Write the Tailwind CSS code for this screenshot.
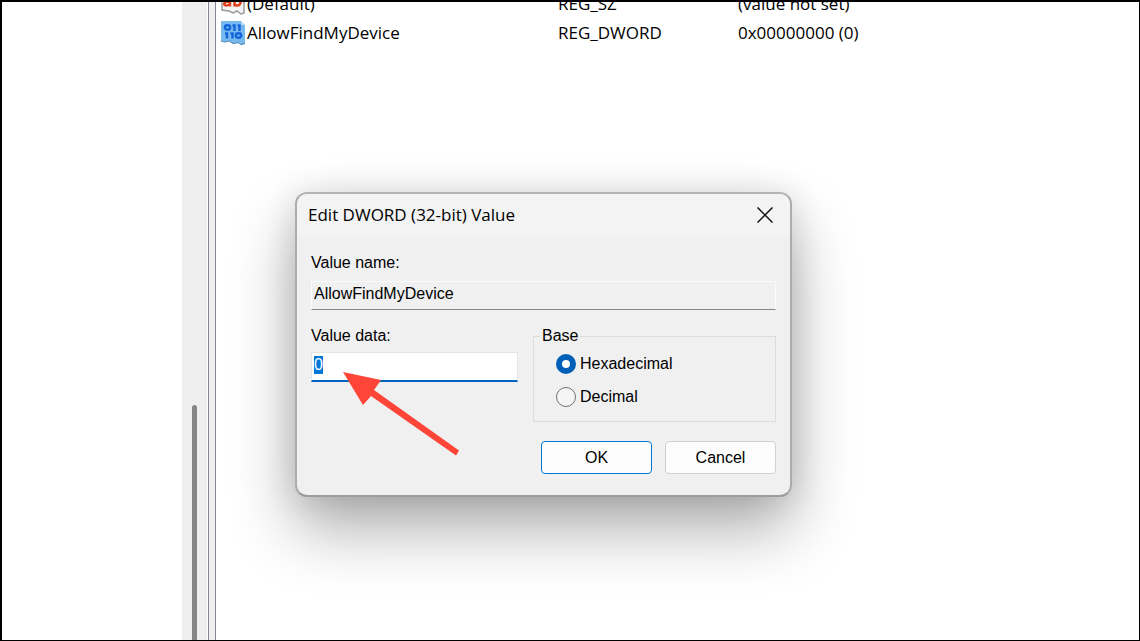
<!DOCTYPE html>
<html lang="en">
<head>
<meta charset="utf-8">
<title>Registry Editor</title>
<script src="https://cdn.jsdelivr.net/npm/@tailwindcss/browser@4"></script>
</head>
<body class="h-screen overflow-hidden bg-white text-black">
<main class="relative flex h-full overflow-hidden border-t-2 border-r border-b border-l-2 border-black">
  <aside class="flex w-[206px] shrink-0 justify-end pr-px" aria-label="Keys">
    <div class="flex w-[25px] flex-col items-center bg-[#efefef]">
      <div class="mt-[403px] w-[5px] flex-1 rounded-t bg-[#858585]"></div>
    </div>
  </aside>
  <div class="w-2 shrink-0 border-x border-[#828790] bg-[#f0f0f0]"></div>
  <section class="min-w-0 flex-1 overflow-hidden pl-[5px]">
    <table class="-mt-[13px] table-fixed border-collapse text-left font-['Open_Sans','Noto_Sans',sans-serif] text-[17px] leading-7 whitespace-nowrap">
      <tbody>
        <tr class="h-[29px]">
          <td class="w-[337px] p-0">
            <div class="flex items-center gap-0.5">
              <svg class="h-6 w-6" viewBox="0 0 24 24" aria-hidden="true">
                <path d="M1 1H23V21L20 22 16 19 12 21 8 19 1 18Z" fill="#f4f4f4" stroke="#9a9a9a" stroke-width="1.500"/>
                <g fill="none" stroke="#e2401b" stroke-width="2.500">
                  <path d="M4 7.500C5 6 9 6 9 8.500V14.500M9 9.500C2 9.500 2 13.500 5.500 13.500 7.500 13.500 9 12 9 11"/>
                  <path d="M13.500 2V14.500M13.500 8C15 5.500 19.500 6 19.500 10S15 14.500 13.500 12"/>
                </g>
              </svg>
              <span>(Default)</span>
            </div>
          </td>
          <td class="w-[180px] p-0">REG_SZ</td>
          <td class="p-0">(value not set)</td>
        </tr>
        <tr class="h-[29px]">
          <td class="p-0">
            <div class="flex items-center gap-0.5">
              <svg class="h-6 w-6" viewBox="0 0 24 24" aria-hidden="true">
                <path d="M0 0H20L24 4V23L20 24 17 22 12 23 8 20 4 21 0 20Z" fill="#76b9ed"/>
                <path d="M0 20 4 21 8 20 12 22.500 17 21.500 20 23.500 24 22.500" fill="none" stroke="#5588b4"/>
                <path d="M20 0V4H24Z" fill="#b9dcf5"/>
                <g fill="none" stroke="#1464dc" stroke-width="2.400">
                  <ellipse cx="6.500" cy="6.500" rx="2.700" ry="2.200"/>
                  <path d="M11.500 4.500H13.500V10M16.500 4.500H18.500V10M4 12.500H6V17.500M9.500 12.500H11.500V17.500"/>
                  <ellipse cx="17.500" cy="14.500" rx="2.700" ry="2.200"/>
                </g>
              </svg>
              <span>AllowFindMyDevice</span>
            </div>
          </td>
          <td class="p-0">REG_DWORD</td>
          <td class="p-0">0x00000000 (0)</td>
        </tr>
      </tbody>
    </table>
  </section>

  <div role="dialog" aria-labelledby="title" class="absolute top-[190px] left-[293px] w-[497px] rounded-xl border-2 border-[#acacac] border-t-[#b4b4b4] border-b-[#9c9c9c] bg-[#f0f0f0] font-['Liberation_Sans',Arial,sans-serif] text-base leading-5 shadow-[0_32px_64px_rgba(0,0,0,0.32),0_2px_32px_rgba(0,0,0,0.12)]">
    <header class="flex h-[43px] items-center justify-between rounded-t-[10px] bg-[#f3f3f3] pr-[15px] pb-0.5 pl-[11px]">
      <h1 id="title" class="font-['Open_Sans','Noto_Sans',sans-serif] text-[17px]">Edit DWORD (32-bit) Value</h1>
      <button type="button" aria-label="Close" class="flex h-5 w-5 items-center justify-center">
        <svg class="h-4 w-4" viewBox="0 0 16 16" fill="none" stroke="#111" stroke-width="1.500" aria-hidden="true"><path d="M.5.5 15.500 15.500M15.500.5.5 15.500"/></svg>
      </button>
    </header>
    <form class="px-[14px] pt-4 pb-[21px]">
      <label for="name" class="block">Value name:</label>
      <input id="name" type="text" readonly value="AllowFindMyDevice" class="mt-2 block h-[29px] w-full border border-[#fbfbfb] border-b-[#858585] bg-[#f0f0f0] px-0.5 pb-1 outline-none">
      <div class="mt-4 flex justify-between">
        <div class="w-[207px]">
          <label for="data" class="block">Value data:</label>
          <div class="relative mt-1.5">
            <input id="data" type="text" value="0" autofocus class="block h-[30px] w-full border border-b-2 border-[#e5e5e5] border-b-[#0067c0] bg-white px-0.5 pb-1 outline-none selection:bg-[#0078d7] selection:text-white">
            <svg class="pointer-events-none absolute top-5 left-8 h-[84px] w-[117px]" viewBox="0 0 117 84" fill="#ff4438" aria-hidden="true"><path d="M0 0 38 8 31 18 116 78.500 113 83.500 28 24 20 33Z"/></svg>
          </div>
        </div>
        <fieldset class="w-[243px] border border-[#dcdcdc] pl-[22px] pb-[14px]">
          <legend class="-ml-4 px-0.5">Base</legend>
          <label class="mt-2 flex items-center gap-1">
            <input type="radio" name="base" checked class="h-5 w-5 appearance-none rounded-full border border-[#707070] bg-[#f5f5f5] checked:border-6 checked:border-[#005fb8] checked:bg-white">Hexadecimal</label>
          <label class="mt-[13px] flex items-center gap-1">
            <input type="radio" name="base" class="h-5 w-5 appearance-none rounded-full border border-[#707070] bg-[#f5f5f5] checked:border-6 checked:border-[#005fb8] checked:bg-white">Decimal</label>
        </fieldset>
      </div>
      <div class="mt-[19px] flex justify-end gap-[13px]">
        <button type="submit" class="h-[33px] w-[111px] rounded border border-[#0078d4] bg-[#fdfdfd]">OK</button>
        <button type="button" class="h-[33px] w-[111px] rounded border border-[#d0d0d0] bg-[#fdfdfd]">Cancel</button>
      </div>
    </form>
  </div>
</main>
<script>
  const data = document.getElementById('data');
  data.focus();
  data.select();
</script>
</body>
</html>
